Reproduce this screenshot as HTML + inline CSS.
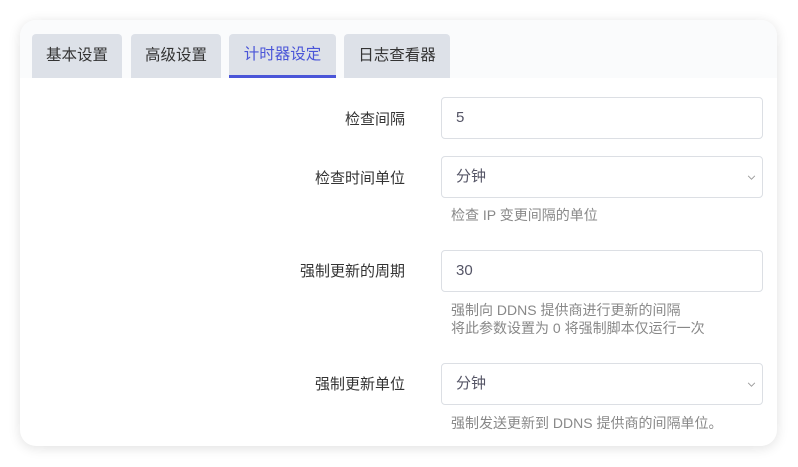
<!DOCTYPE html>
<html><head><meta charset="utf-8"><style>
*{box-sizing:border-box;margin:0;padding:0}
body{width:798px;height:467px;background:#fff;font-family:"Liberation Sans","Noto Sans CJK SC",sans-serif;position:relative;overflow:hidden}
.card{position:absolute;left:20px;top:20px;width:757px;height:426px;border-radius:16px;background:#fff;box-shadow:0 2px 12px rgba(0,0,0,.12);overflow:hidden}
.strip{position:absolute;left:0;top:0;width:757px;height:58px;background:#fafbfc}
.tab{position:absolute;top:14px;height:44px;background:#dde1e8;border-radius:4px 4px 0 0;font-size:15.5px;color:#333;text-align:center;line-height:44px}
.tab.act{color:#4a55d8;border-bottom:3px solid #4a55d8;line-height:42px}
.lbl{position:absolute;right:372px;font-size:15px;color:#333;text-align:right;width:200px}
.inp{position:absolute;left:421px;width:322px;height:42px;border:1px solid #dcdfe4;border-radius:4px;font-size:15px;color:#556;padding-left:14px;line-height:40px;background:#fff}
.chev{position:absolute;right:4px;top:16px;width:9px;height:9px}
.help{position:absolute;left:431px;font-size:14px;color:#888;line-height:18px}
</style></head><body>
<div class="card">
<div class="strip"></div>
<div class="tab" style="left:12px;width:90px">基本设置</div>
<div class="tab" style="left:111px;width:90px">高级设置</div>
<div class="tab act" style="left:209px;width:107px">计时器设定</div>
<div class="tab" style="left:324px;width:106px">日志查看器</div>

<div class="lbl" style="top:88px">检查间隔</div>
<div class="inp" style="top:77px">5</div>

<div class="lbl" style="top:147px">检查时间单位</div>
<div class="inp" style="top:136px">分钟<svg class="chev" viewBox="0 0 8 8" style="right:6px"><path d="M1 2.5L4 5.5L7 2.5" fill="none" stroke="#999" stroke-width="0.8"/></svg></div>
<div class="help" style="top:186px">检查 IP 变更间隔的单位</div>

<div class="lbl" style="top:240px">强制更新的周期</div>
<div class="inp" style="top:230px">30</div>
<div class="help" style="top:281px">强制向 DDNS 提供商进行更新的间隔<br>将此参数设置为 0 将强制脚本仅运行一次</div>

<div class="lbl" style="top:353px">强制更新单位</div>
<div class="inp" style="top:343px">分钟<svg class="chev" viewBox="0 0 8 8" style="right:6px"><path d="M1 2.5L4 5.5L7 2.5" fill="none" stroke="#999" stroke-width="0.8"/></svg></div>
<div class="help" style="top:394px">强制发送更新到 DDNS 提供商的间隔单位。</div>
</div>
</body></html>
